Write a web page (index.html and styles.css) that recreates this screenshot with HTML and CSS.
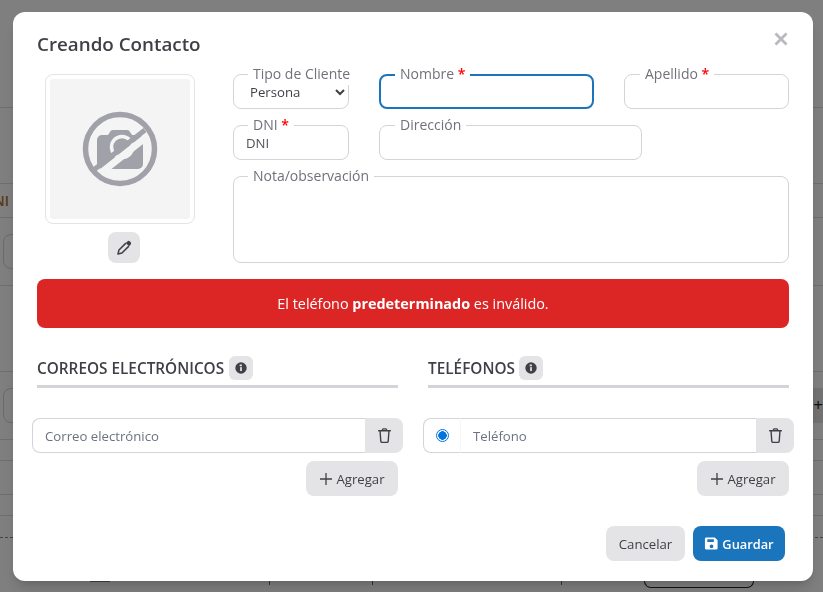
FILE: index.html
```html
<!DOCTYPE html>
<html lang="es">
<head>
<meta charset="utf-8">
<title>Creando Contacto</title>
<link rel="stylesheet" href="styles.css">
</head>
<body>
<div class="page">
  <div class="bg-row h108"></div>
  <div class="bg-row h76"></div>
  <div class="bg-row h34 clip"><span class="bg-th">DNI</span></div>
  <div class="bg-row h68"><span class="bg-box"></span></div>
  <div class="bg-row h86"></div>
  <div class="bg-row h68"><span class="bg-box"></span><span class="bg-add">+</span></div>
  <div class="bg-row h21"></div>
  <div class="bg-row h34"></div>
  <div class="bg-row h21"></div>
  <div class="bg-dash"></div>
  <div class="bg-foot">
    <span class="bg-pill"></span>
    <span class="bg-tick t1"></span>
    <span class="bg-tick t2"></span>
    <span class="bg-tick t3"></span>
    <span class="bg-btn"></span>
  </div>
</div>

<div class="overlay">
  <div class="modal">
    <header class="modal-head">
      <h2 class="modal-title">Creando Contacto</h2>
      <svg class="close" viewBox="0 0 16 16" aria-label="Cerrar"><path d="M2.500 2.500l11 11M13.500 2.500l-11 11"/></svg>
    </header>

    <div class="top">
      <div class="photo-col">
        <div class="photo">
          <div class="photo-inner">
            <svg class="nophoto" viewBox="0 0 80 80">
              <path class="cam" d="M17 30a5 5 0 0 1 5-5h6l2-3a3 3 0 0 1 3-2h14a3 3 0 0 1 3 2l2 3h6a5 5 0 0 1 5 5v24a5 5 0 0 1-5 5H22a5 5 0 0 1-5-5z"/>
              <circle class="lens" cx="42" cy="37" r="10.500"/>
              <path class="slash-gap" d="M16 66.700L65 28"/>
              <path class="slash" d="M13 60.500L65 20"/>
              <circle class="ring" cx="40" cy="39" r="34.500"/>
            </svg>
          </div>
        </div>
        <button class="btn icon-btn" type="button" aria-label="Editar">
          <svg class="ico-pen" viewBox="0 0 16 16"><path class="pen-fill" d="M10.700 2.300a1.700 1.700 0 0 1 2.400 0l.6.6a1.700 1.700 0 0 1 0 2.400l-1.500 1.500-3-3z"/><path class="pen-line" d="M9.300 3.900l-6.500 6.500-1 3.800 3.800-1 6.500-6.500"/></svg>
        </button>
      </div>

      <div class="fields">
        <div class="field-row">
          <fieldset class="field w116">
            <legend class="clipless">Tipo de Cliente</legend>
            <select class="ctl sel"><option>Persona</option></select>
          </fieldset>
          <fieldset class="field w215 focus">
            <legend>Nombre <b class="req">*</b></legend>
            <input class="ctl" type="text">
          </fieldset>
          <fieldset class="field w165">
            <legend>Apellido <b class="req">*</b></legend>
            <input class="ctl" type="text">
          </fieldset>
        </div>
        <div class="field-row">
          <fieldset class="field w116">
            <legend>DNI <b class="req">*</b></legend>
            <input class="ctl" type="text" placeholder="DNI">
          </fieldset>
          <fieldset class="field w263">
            <legend>Dirección</legend>
            <input class="ctl" type="text">
          </fieldset>
        </div>
        <fieldset class="field note">
          <legend>Nota/observación</legend>
          <textarea class="ctl area"></textarea>
        </fieldset>
      </div>
    </div>

    <div class="alert">El teléfono <strong>predeterminado</strong> es inválido.</div>

    <div class="lists">
      <section class="list">
        <div class="list-head">
          <h3 class="list-title">CORREOS ELECTRÓNICOS</h3>
          <span class="info-badge"><svg viewBox="0 0 16 16"><circle class="i-bg" cx="8" cy="8" r="6.500"/><rect class="i-fg" x="7" y="7" width="2" height="4.500"/><rect class="i-fg" x="6.500" y="4" width="2.500" height="2"/></svg></span>
        </div>
        <div class="group">
          <input class="group-input" type="text" placeholder="Correo electrónico">
          <button class="group-del" type="button" aria-label="Eliminar">
            <svg class="ico-trash" viewBox="0 0 16 16"><path d="M2.500 3.500h11M6 3.500V2.800a1 1 0 0 1 1-1h2a1 1 0 0 1 1 1v.7M3.800 3.500l.7 9.800a1.300 1.300 0 0 0 1.300 1.200h4.400a1.300 1.300 0 0 0 1.300-1.200l.7-9.800"/></svg>
          </button>
        </div>
        <div class="add-row">
          <button class="btn add" type="button"><svg class="ico-plus" viewBox="0 0 14 14"><path d="M1 7h12M7 1v12"/></svg>Agregar</button>
        </div>
      </section>

      <section class="list">
        <div class="list-head">
          <h3 class="list-title">TELÉFONOS</h3>
          <span class="info-badge"><svg viewBox="0 0 16 16"><circle class="i-bg" cx="8" cy="8" r="6.500"/><rect class="i-fg" x="7" y="7" width="2" height="4.500"/><rect class="i-fg" x="6.500" y="4" width="2.500" height="2"/></svg></span>
        </div>
        <div class="group">
          <span class="radio-cell"><span class="radio"></span></span>
          <input class="group-input tel" type="text" placeholder="Teléfono">
          <button class="group-del" type="button" aria-label="Eliminar">
            <svg class="ico-trash" viewBox="0 0 16 16"><path d="M2.500 3.500h11M6 3.500V2.800a1 1 0 0 1 1-1h2a1 1 0 0 1 1 1v.7M3.800 3.500l.7 9.800a1.300 1.300 0 0 0 1.300 1.200h4.400a1.300 1.300 0 0 0 1.300-1.200l.7-9.800"/></svg>
          </button>
        </div>
        <div class="add-row">
          <button class="btn add" type="button"><svg class="ico-plus" viewBox="0 0 14 14"><path d="M1 7h12M7 1v12"/></svg>Agregar</button>
        </div>
      </section>
    </div>

    <footer class="modal-foot">
      <button class="btn cancel" type="button">Cancelar</button>
      <button class="btn save" type="button"><svg class="ico-save" viewBox="0 0 16 16"><path d="M2.500 1.500h9l3 3v8.500a1.500 1.500 0 0 1-1.500 1.500H2.500A1.500 1.500 0 0 1 1 13V3a1.500 1.500 0 0 1 1.500-1.500zM3.500 3.500v3h7v-3zM8 9a2 2 0 1 0 0 4 2 2 0 0 0 0-4z" fill-rule="evenodd"/></svg>Guardar</button>
    </footer>
  </div>
</div>
</body>
</html>
```

FILE: styles.css
```css
* { box-sizing: border-box; }
html, body { margin: 0; height: 100%; overflow: hidden; }
body { font-family: "Open Sans", "Noto Sans", sans-serif; color: #3f3f46; background: #fff; }

/* page behind the dialog */
.page { height: 592px; overflow: hidden; }
.bg-row { border-bottom: 1px solid #dedede; display: flex; justify-content: space-between; align-items: flex-start; }
.h108 { height: 108px; }
.h76 { height: 76px; }
.h34 { height: 34px; }
.h68 { height: 68px; padding-top: 16px; }
.h86 { height: 86px; }
.h21 { height: 21px; }
.bg-th { font-size: 14px; font-weight: 600; color: #b0702a; width: 9px; direction: rtl; overflow: hidden; white-space: nowrap; margin-top: 7px; }
.bg-box { width: 60px; height: 35px; margin-left: 3px; border: 1px solid #d4d4d8; border-radius: 8px; }
.bg-add { width: 60px; height: 35px; background: #e4e4e7; text-align: right; color: #222; font-size: 17px; line-height: 33px; }
.bg-dash { margin-top: 21px; border-top: 1px dashed #888; }
.bg-foot { display: flex; margin-top: 43px; height: 8px; align-items: flex-start; }
.bg-pill { width: 20px; height: 1px; margin-left: 90px; background: #888; }
.bg-tick { width: 1px; height: 4px; background: #666; }
.t1 { margin-left: 159px; }
.t2 { margin-left: 102px; }
.t3 { margin-left: 188px; }
.bg-btn { width: 110px; height: 7px; margin-left: 82px; border: 1px solid #222; border-top: 0; border-radius: 0 0 8px 8px; }

/* dialog */
.overlay { position: fixed; inset: 0; background: rgba(0, 0, 0, .5); }
.modal { width: 800px; height: 569px; margin: 12px 0 0 13px; padding: 0 24px; background: #fff; border-radius: 12px; box-shadow: 0 10px 15px -3px rgba(0,0,0,.15), 0 4px 6px -2px rgba(0,0,0,.1); }
.modal-head { height: 52px; display: flex; justify-content: space-between; align-items: flex-start; padding-top: 20px; }
.modal-title { margin: 0; font-size: 18.800px; line-height: 25px; font-weight: 600; color: #3f3f46; }
.close { width: 16px; height: 16px; margin-top: -1px; fill: none; stroke: #b9b9bd; stroke-width: 2.800; }

.top { display: flex; gap: 30px; }
.photo-col { width: 166px; padding-top: 10px; display: flex; flex-direction: column; align-items: center; }
.photo { width: 150px; height: 150px; padding: 4px; border: 1px solid #e4e4e7; border-radius: 8px; }
.photo-inner { width: 140px; height: 140px; background: #f4f4f5; border-radius: 3px; display: flex; align-items: center; justify-content: center; }
.nophoto { width: 80px; height: 80px; margin-top: 2px; }
.cam { fill: #a1a1aa; }
.lens { fill: none; stroke: #f4f4f5; stroke-width: 3.500; }
.slash-gap { fill: none; stroke: #f4f4f5; stroke-width: 7; }
.slash { fill: none; stroke: #a1a1aa; stroke-width: 5; }
.ring { fill: none; stroke: #a1a1aa; stroke-width: 5.500; }

.btn { border: 0; border-radius: 8px; background: #e4e4e7; color: #3f3f46; font-family: inherit; font-size: 13.200px; height: 35px; padding: 0; display: inline-flex; align-items: center; justify-content: center; }
.icon-btn { width: 32px; height: 31px; margin: 8px 0 0 8px; }
.ico-pen { width: 17px; height: 17px; }
.pen-fill { fill: #3f3f46; }
.pen-line { fill: none; stroke: #3f3f46; stroke-width: 1.400; stroke-linejoin: round; }

.fields { width: 556px; display: flex; flex-direction: column; gap: 6px; }
.field-row { display: flex; gap: 30px; }
.field { margin: 0; padding: 0; min-width: 0; height: 45px; border: 1px solid #d4d4d8; border-radius: 8px; background: #fff; }
.field legend { margin-left: 15px; padding: 0 5px 2px; font-size: 14px; line-height: 19px; color: #71717a; white-space: nowrap; }
.w116 legend, .note legend { margin-left: 14px; }
.field legend.clipless { margin-right: -3px; }
.req { color: #f00; font-weight: 600; }
.w116 { width: 116px; }
.w215 { width: 215px; }
.w165 { width: 165px; }
.w263 { width: 263px; }
.focus { border: 2px solid #1b75bc; }
.focus legend { margin-left: 14px; }
.ctl { display: block; width: 100%; height: 24px; margin-top: -5px; border: 0; outline: 0; padding: 0 12px; background: transparent; font-family: inherit; font-size: 13.200px; color: #52525b; }
.ctl::placeholder { color: #52525b; opacity: 1; }
.sel { padding: 0 0 0 12px; color: #3f3f46; }
.note { height: 97px; }
.area { height: 76px; resize: none; }

.alert { margin-top: 16px; height: 49px; background: #dc2626; border-radius: 8px; color: #fff; font-size: 14.400px; line-height: 49px; text-align: center; }
.alert strong { font-weight: 700; }

.lists { display: flex; gap: 30px; margin-top: 28px; }
.list { width: 361px; }
.list-head { height: 32px; display: flex; align-items: flex-start; gap: 4.500px; border-bottom: 3px solid #d4d4d8; }
.list-title { margin: 0; font-size: 15.350px; line-height: 24px; font-weight: 600; color: #3f3f46; }
.info-badge { width: 24px; height: 24px; border-radius: 6px; background: #e4e4e7; display: flex; align-items: center; justify-content: center; }
.info-badge svg { width: 14px; height: 14px; }
.i-bg { fill: #3f3f46; }
.i-fg { fill: #e4e4e7; }

.group { display: flex; height: 35px; margin: 30px -5px 0; }
.group-input { flex: 1; min-width: 0; height: 35px; border: 1px solid #d4d4d8; border-right: 0; border-radius: 8px 0 0 8px; padding: 0 12px; font-family: inherit; font-size: 13.200px; outline: 0; background: #fff; }
.group-input::placeholder { color: #6b7280; opacity: 1; }
.group-del { width: 38px; height: 35px; border: 0; padding: 0; background: #e4e4e7; border-radius: 0 8px 8px 0; display: flex; align-items: center; justify-content: center; }
.ico-trash { width: 17px; height: 17px; fill: none; stroke: #3f3f46; stroke-width: 1.300; stroke-linecap: round; stroke-linejoin: round; }
.radio-cell { width: 38px; height: 35px; border: 1px solid #d4d4d8; border-right: 1px solid #f7f7f8; border-radius: 8px 0 0 8px; display: flex; align-items: center; justify-content: center; }
.radio { width: 13px; height: 13px; border: 1.500px solid #0075e0; border-radius: 50%; background: radial-gradient(circle, #0075e0 0 4px, #fff 4.500px); }
.tel { border-left: 0; border-radius: 0; }

.add-row { display: flex; justify-content: flex-end; margin-top: 8px; }
.add { width: 92px; }
.ico-plus { width: 14px; height: 14px; margin-right: 3px; fill: none; stroke: #3f3f46; stroke-width: 1.300; }

.modal-foot { display: flex; justify-content: flex-end; gap: 8px; margin-top: 30px; padding-right: 4px; }
.cancel { width: 79px; }
.save { width: 92px; background: #1b75bc; color: #fff; font-weight: 600; font-size: 12.800px; }
.ico-save { width: 15px; height: 15px; margin-right: 3px; fill: #fff; }
```
